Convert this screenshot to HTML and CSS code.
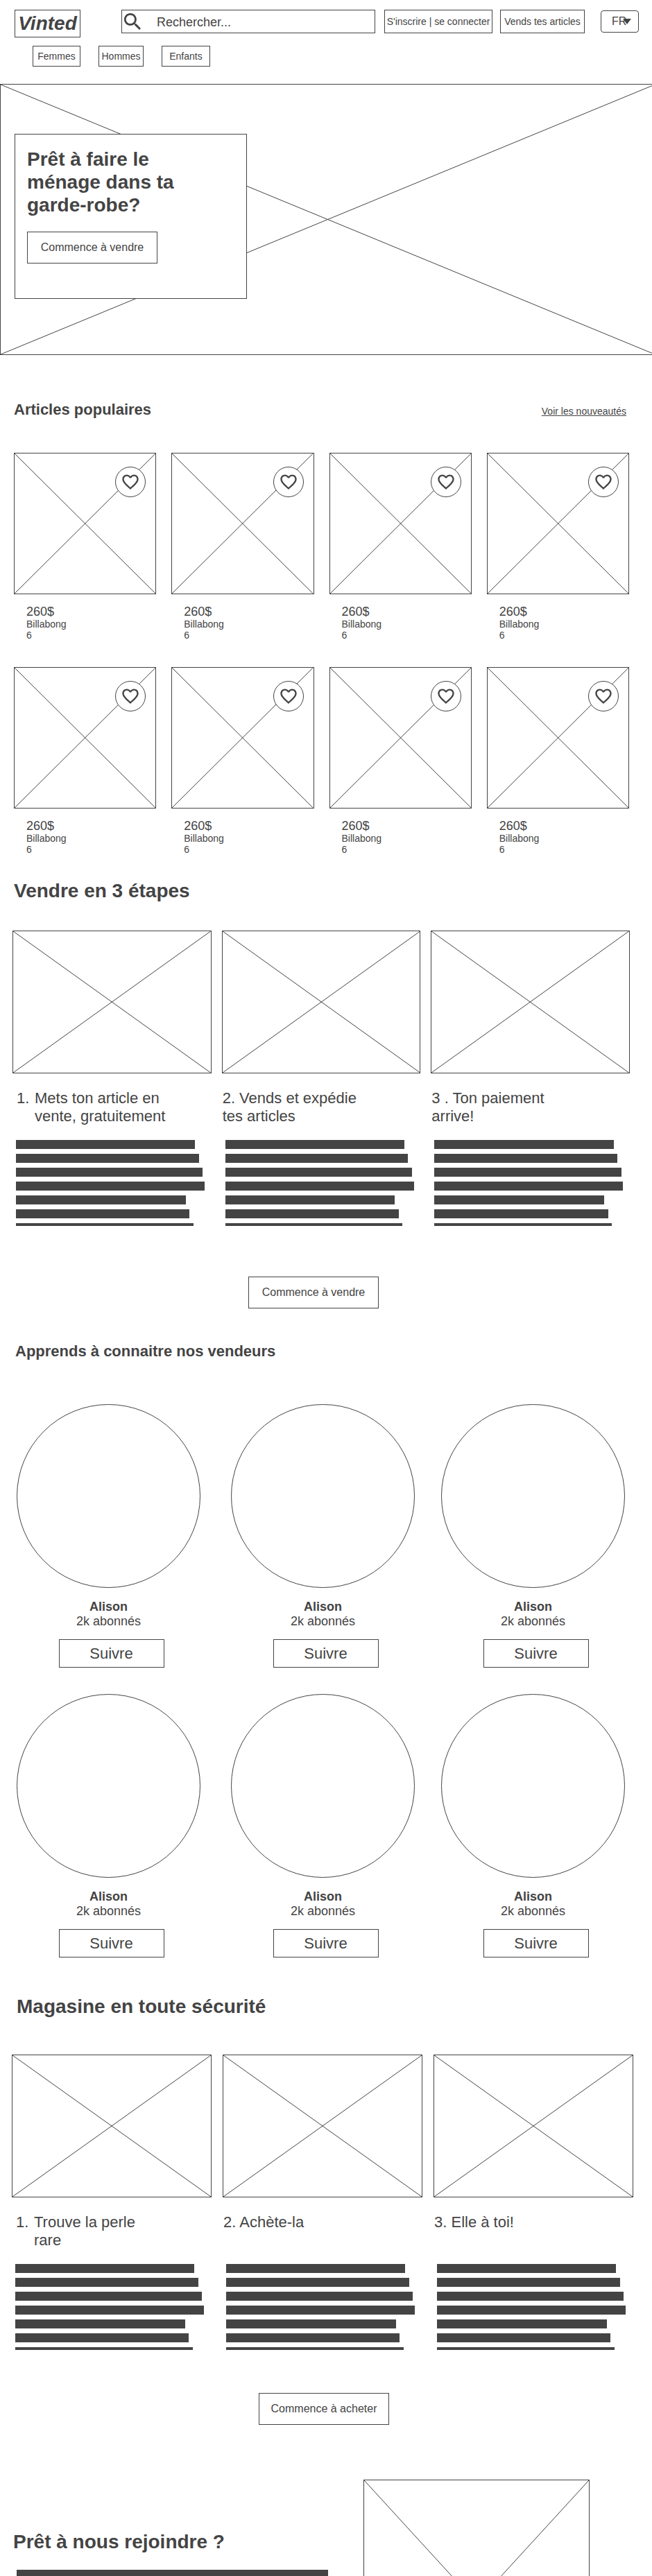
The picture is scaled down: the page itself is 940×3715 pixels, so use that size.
FILE: index.html
```html
<!DOCTYPE html>
<html lang="fr">
<head>
<meta charset="utf-8">
<meta name="viewport" content="width=device-width, initial-scale=1">
<title>Vinted</title>
<link rel="stylesheet" href="styles.css">
</head>
<body>
<svg width="0" height="0" class="sprite" aria-hidden="true">
  <symbol id="heart" viewBox="0 0 24 24"><path d="M16.5 3c-1.74 0-3.41.81-4.5 2.09C10.91 3.81 9.24 3 7.5 3 4.42 3 2 5.42 2 8.5c0 3.78 3.4 6.86 8.55 11.54L12 21.35l1.45-1.32C18.6 15.36 22 12.28 22 8.5 22 5.42 19.58 3 16.5 3zm-4.4 15.55l-.1.1-.1-.1C7.14 14.24 4 11.39 4 8.5 4 6.5 5.5 5 7.5 5c1.54 0 3.04.99 3.57 2.36h1.87C13.46 5.99 14.96 5 16.5 5c2 0 3.5 1.5 3.5 3.5 0 2.89-3.14 5.74-7.9 10.05z"/></symbol>
</svg>

<header class="header">
  <div class="header-top">
    <a class="logo box" href="#">Vinted</a>
    <form class="search box" role="search">
      <svg class="search-icon" viewBox="3 3 17.49 17.49" aria-hidden="true"><path d="M15.5 14h-.79l-.28-.27C15.41 12.59 16 11.11 16 9.5 16 5.91 13.09 3 9.5 3S3 5.91 3 9.5 5.91 16 9.5 16c1.61 0 3.09-.59 4.23-1.57l.27.28v.79l5 4.99L20.49 19l-4.99-5zm-6 0C7.01 14 5 11.99 5 9.5S7.01 5 9.5 5 14 7.01 14 9.5 11.99 14 9.5 14z"/></svg>
      <input class="search-input" type="search" placeholder="Rechercher..." aria-label="Rechercher">
    </form>
    <button class="box login" type="button">S'inscrire | se connecter</button>
    <button class="box sell" type="button">Vends tes articles</button>
    <div class="lang">
      <select class="lang-select" aria-label="Langue"><option>FR</option></select>
      <svg class="lang-arrow" viewBox="0 0 12 8" aria-hidden="true"><path d="M0 0h12L6 8z"/></svg>
    </div>
  </div>
  <nav class="nav">
    <a class="box nav-women" href="#">Femmes</a>
    <a class="box nav-men" href="#">Hommes</a>
    <a class="box nav-kids" href="#">Enfants</a>
  </nav>
</header>

<main>
  <section class="hero">
    <svg class="hero-lines" aria-hidden="true"><line x1="0" y1="0" x2="100%" y2="100%"/><line x1="0" y1="100%" x2="100%" y2="0"/></svg>
    <div class="hero-card box">
      <h1 class="title">Prêt à faire le<br>ménage dans ta<br>garde-robe?</h1>
      <button class="box cta" type="button">Commence à vendre</button>
    </div>
  </section>

  <section class="popular">
    <div class="popular-head">
      <h2 class="subtitle">Articles populaires</h2>
      <a class="more" href="#">Voir les nouveautés</a>
    </div>
    <div class="products">
      <article class="product">
        <svg class="picture" aria-hidden="true"><line x1="0" y1="0" x2="100%" y2="100%"/><line x1="0" y1="100%" x2="100%" y2="0"/></svg>
        <button class="like" type="button" aria-label="Ajouter aux favoris"><svg><use href="#heart"/></svg></button>
        <div class="product-info"><p class="price">260$</p><p>Billabong</p><p>6</p></div>
      </article>
      <article class="product">
        <svg class="picture" aria-hidden="true"><line x1="0" y1="0" x2="100%" y2="100%"/><line x1="0" y1="100%" x2="100%" y2="0"/></svg>
        <button class="like" type="button" aria-label="Ajouter aux favoris"><svg><use href="#heart"/></svg></button>
        <div class="product-info"><p class="price">260$</p><p>Billabong</p><p>6</p></div>
      </article>
      <article class="product">
        <svg class="picture" aria-hidden="true"><line x1="0" y1="0" x2="100%" y2="100%"/><line x1="0" y1="100%" x2="100%" y2="0"/></svg>
        <button class="like" type="button" aria-label="Ajouter aux favoris"><svg><use href="#heart"/></svg></button>
        <div class="product-info"><p class="price">260$</p><p>Billabong</p><p>6</p></div>
      </article>
      <article class="product">
        <svg class="picture" aria-hidden="true"><line x1="0" y1="0" x2="100%" y2="100%"/><line x1="0" y1="100%" x2="100%" y2="0"/></svg>
        <button class="like" type="button" aria-label="Ajouter aux favoris"><svg><use href="#heart"/></svg></button>
        <div class="product-info"><p class="price">260$</p><p>Billabong</p><p>6</p></div>
      </article>
      <article class="product">
        <svg class="picture" aria-hidden="true"><line x1="0" y1="0" x2="100%" y2="100%"/><line x1="0" y1="100%" x2="100%" y2="0"/></svg>
        <button class="like" type="button" aria-label="Ajouter aux favoris"><svg><use href="#heart"/></svg></button>
        <div class="product-info"><p class="price">260$</p><p>Billabong</p><p>6</p></div>
      </article>
      <article class="product">
        <svg class="picture" aria-hidden="true"><line x1="0" y1="0" x2="100%" y2="100%"/><line x1="0" y1="100%" x2="100%" y2="0"/></svg>
        <button class="like" type="button" aria-label="Ajouter aux favoris"><svg><use href="#heart"/></svg></button>
        <div class="product-info"><p class="price">260$</p><p>Billabong</p><p>6</p></div>
      </article>
      <article class="product">
        <svg class="picture" aria-hidden="true"><line x1="0" y1="0" x2="100%" y2="100%"/><line x1="0" y1="100%" x2="100%" y2="0"/></svg>
        <button class="like" type="button" aria-label="Ajouter aux favoris"><svg><use href="#heart"/></svg></button>
        <div class="product-info"><p class="price">260$</p><p>Billabong</p><p>6</p></div>
      </article>
      <article class="product">
        <svg class="picture" aria-hidden="true"><line x1="0" y1="0" x2="100%" y2="100%"/><line x1="0" y1="100%" x2="100%" y2="0"/></svg>
        <button class="like" type="button" aria-label="Ajouter aux favoris"><svg><use href="#heart"/></svg></button>
        <div class="product-info"><p class="price">260$</p><p>Billabong</p><p>6</p></div>
      </article>
    </div>
  </section>

  <section class="selling">
    <h2 class="title">Vendre en 3 étapes</h2>
    <div class="steps">
      <article>
        <svg class="picture" aria-hidden="true"><line x1="0" y1="0" x2="100%" y2="100%"/><line x1="0" y1="100%" x2="100%" y2="0"/></svg>
        <h3 class="step-title numbered"><span>1.</span><span>Mets ton article en<br>vente, gratuitement</span></h3>
        <div class="lines"><i></i><i></i><i></i><i></i><i></i><i></i><i></i></div>
      </article>
      <article>
        <svg class="picture" aria-hidden="true"><line x1="0" y1="0" x2="100%" y2="100%"/><line x1="0" y1="100%" x2="100%" y2="0"/></svg>
        <h3 class="step-title">2. Vends et expédie<br>tes articles</h3>
        <div class="lines"><i></i><i></i><i></i><i></i><i></i><i></i><i></i></div>
      </article>
      <article>
        <svg class="picture" aria-hidden="true"><line x1="0" y1="0" x2="100%" y2="100%"/><line x1="0" y1="100%" x2="100%" y2="0"/></svg>
        <h3 class="step-title">3 . Ton paiement<br>arrive!</h3>
        <div class="lines"><i></i><i></i><i></i><i></i><i></i><i></i><i></i></div>
      </article>
    </div>
    <div class="action"><button class="box cta" type="button">Commence à vendre</button></div>
  </section>

  <section class="sellers">
    <h2 class="subtitle">Apprends à connaitre nos vendeurs</h2>
    <div class="seller-grid">
      <article class="seller"><div class="avatar"></div><h3 class="name">Alison</h3><p>2k abonnés</p><button class="box follow" type="button">Suivre</button></article>
      <article class="seller"><div class="avatar"></div><h3 class="name">Alison</h3><p>2k abonnés</p><button class="box follow" type="button">Suivre</button></article>
      <article class="seller"><div class="avatar"></div><h3 class="name">Alison</h3><p>2k abonnés</p><button class="box follow" type="button">Suivre</button></article>
      <article class="seller"><div class="avatar"></div><h3 class="name">Alison</h3><p>2k abonnés</p><button class="box follow" type="button">Suivre</button></article>
      <article class="seller"><div class="avatar"></div><h3 class="name">Alison</h3><p>2k abonnés</p><button class="box follow" type="button">Suivre</button></article>
      <article class="seller"><div class="avatar"></div><h3 class="name">Alison</h3><p>2k abonnés</p><button class="box follow" type="button">Suivre</button></article>
    </div>
  </section>

  <section class="buying">
    <h2 class="title">Magasine en toute sécurité</h2>
    <div class="steps">
      <article>
        <svg class="picture" aria-hidden="true"><line x1="0" y1="0" x2="100%" y2="100%"/><line x1="0" y1="100%" x2="100%" y2="0"/></svg>
        <h3 class="step-title numbered"><span>1.</span><span>Trouve la perle<br>rare</span></h3>
        <div class="lines"><i></i><i></i><i></i><i></i><i></i><i></i><i></i></div>
      </article>
      <article>
        <svg class="picture" aria-hidden="true"><line x1="0" y1="0" x2="100%" y2="100%"/><line x1="0" y1="100%" x2="100%" y2="0"/></svg>
        <h3 class="step-title">2. Achète-la</h3>
        <div class="lines"><i></i><i></i><i></i><i></i><i></i><i></i><i></i></div>
      </article>
      <article>
        <svg class="picture" aria-hidden="true"><line x1="0" y1="0" x2="100%" y2="100%"/><line x1="0" y1="100%" x2="100%" y2="0"/></svg>
        <h3 class="step-title">3. Elle à toi!</h3>
        <div class="lines"><i></i><i></i><i></i><i></i><i></i><i></i><i></i></div>
      </article>
    </div>
    <div class="action"><button class="box cta" type="button">Commence à acheter</button></div>
  </section>

  <section class="join">
    <div class="join-text">
      <h2 class="title">Prêt à nous rejoindre ?</h2>
      <div class="lines"><i></i></div>
    </div>
    <svg class="picture" aria-hidden="true"><line x1="0" y1="0" x2="100%" y2="100%"/><line x1="0" y1="100%" x2="100%" y2="0"/></svg>
  </section>
</main>
</body>
</html>
```

FILE: styles.css
```css
:root {
  --ink: #444;
}

* {
  box-sizing: border-box;
}

body {
  margin: 0;
  background: #fff;
  color: var(--ink);
  font: 14px/16px "Liberation Sans", Arial, sans-serif;
}

h1, h2, h3, p {
  margin: 0;
}

button, input, select {
  font: inherit;
  color: inherit;
}

a {
  color: inherit;
}

.sprite {
  position: absolute;
}

.box {
  display: flex;
  align-items: center;
  justify-content: center;
  padding: 0;
  border: 1px solid var(--ink);
  background: #fff;
  text-decoration: none;
  white-space: nowrap;
}

.title {
  font-size: 28px;
  line-height: 32px;
  font-weight: bold;
}

.subtitle {
  font-size: 22px;
  line-height: 26px;
  font-weight: bold;
}

.cta {
  width: 188px;
  height: 46px;
  font-size: 16px;
}

.picture {
  display: block;
  width: 100%;
  border: 1px solid var(--ink);
}

.picture line,
.hero-lines line {
  stroke: var(--ink);
  stroke-width: 1;
}

/* Header */

.header {
  padding: 14px 19px 25px 21px;
}

.header-top {
  display: flex;
  align-items: flex-start;
}

.logo {
  width: 95px;
  height: 40px;
  margin-right: 59px;
  font-size: 28px;
  font-weight: bold;
  font-style: italic;
}

.search {
  flex: 1;
  min-width: 0;
  height: 34px;
  margin-right: 13px;
  padding-left: 3px;
}

.search-icon {
  flex: none;
  width: 24px;
  height: 24px;
  fill: var(--ink);
}

.search-input {
  flex: 1;
  min-width: 0;
  height: 32px;
  padding: 2px 8px 0 23px;
  border: 0;
  outline: 0;
  background: none;
  font-size: 18px;
  appearance: none;
}

.search-input::placeholder {
  color: var(--ink);
  opacity: 1;
}

.login {
  width: 156px;
  height: 34px;
  margin-right: 11px;
}

.sell {
  width: 122px;
  height: 34px;
  margin-right: 23px;
}

.lang {
  position: relative;
  margin-top: 1px;
}

.lang-select {
  display: block;
  width: 55px;
  height: 32px;
  padding: 0 0 0 15px;
  border: 1px solid var(--ink);
  border-radius: 4px;
  background: #fff;
  font-size: 16px;
  appearance: none;
}

.lang-arrow {
  position: absolute;
  top: 12px;
  right: 11px;
  width: 12px;
  height: 8px;
  fill: var(--ink);
  pointer-events: none;
}

.nav {
  display: flex;
  gap: 26px;
  margin-top: 12px;
  padding-left: 26px;
}

.nav .box {
  height: 30px;
}

.nav-women {
  width: 69px;
}

.nav-men {
  width: 65px;
}

.nav-kids {
  width: 70px;
}

/* Hero */

.hero {
  position: relative;
  overflow: hidden;
  padding: 71px 21px 80px 20px;
  border: 1px solid var(--ink);
  border-right: 0;
}

.hero-lines {
  position: absolute;
  top: 0;
  left: 0;
  width: calc(100% + 4px);
  height: 100%;
}

.hero-card {
  position: relative;
  flex-direction: column;
  align-items: flex-start;
  justify-content: flex-start;
  gap: 22px;
  width: 335px;
  padding: 19px 17px 50px;
}

.hero-card .title {
  line-height: 33px;
}

/* Popular items */

.popular {
  padding: 66px 33px 0 20px;
}

.popular-head {
  display: flex;
  align-items: baseline;
  justify-content: space-between;
  margin-bottom: 49px;
  padding-right: 4px;
}

.products {
  display: grid;
  grid-template-columns: repeat(4, 1fr);
  gap: 38px 22px;
}

.product {
  position: relative;
}

.product .picture {
  height: 204px;
}

.like {
  position: absolute;
  top: 20px;
  right: 15px;
  display: grid;
  place-items: center;
  width: 44px;
  height: 44px;
  padding: 0;
  border: 1px solid var(--ink);
  border-radius: 50%;
  background: #fff;
}

.like svg {
  width: 28px;
  height: 28px;
  fill: var(--ink);
}

.product-info {
  padding: 15px 0 0 18px;
}

.price {
  font-size: 18px;
  line-height: 20px;
}

/* Steps */

.selling {
  padding: 36px 32px 0 18px;
}

.selling .title {
  padding-left: 2px;
}

.steps {
  display: grid;
  grid-template-columns: repeat(3, 1fr);
  gap: 15px;
  margin-top: 41px;
}

.steps .picture {
  height: 206px;
}

.step-title {
  min-height: 52px;
  margin: 23px 0 21px;
  padding-left: 1px;
  font-size: 22px;
  line-height: 26px;
  font-weight: normal;
}

.numbered {
  display: grid;
  grid-template-columns: 26px 1fr;
  padding-left: 6px;
}

.lines {
  display: flex;
  flex-direction: column;
  gap: 7px;
  max-width: 277px;
  padding-left: 5px;
}

.lines i {
  height: 13px;
  background: var(--ink);
}

.steps .lines i:nth-child(1) { width: 95%; }
.steps .lines i:nth-child(2) { width: 97%; }
.steps .lines i:nth-child(3) { width: 99%; }
.steps .lines i:nth-child(5) { width: 90%; }
.steps .lines i:nth-child(6) { width: 92%; }
.steps .lines i:nth-child(7) { width: 94%; height: 4px; }

.action {
  display: flex;
  justify-content: center;
  margin-top: 73px;
}

.selling .action {
  padding-right: 22px;
}

/* Sellers */

.sellers {
  padding: 49px 39px 0 22px;
}

.seller-grid {
  display: grid;
  grid-template-columns: 309fr 303fr 265fr;
  gap: 38px 0;
  margin-top: 63px;
  padding-left: 2px;
}

.seller {
  display: flex;
  flex-direction: column;
  align-items: center;
  width: 265px;
  font-size: 18px;
  line-height: 21px;
}

.avatar {
  width: 265px;
  height: 265px;
  margin-bottom: 17px;
  border: 1px solid var(--ink);
  border-radius: 50%;
}

.name {
  font-size: 18px;
}

.follow {
  width: 152px;
  height: 41px;
  margin: 15px 0 0 8px;
  font-size: 22px;
}

/* Buying */

.buying {
  padding: 55px 27px 0 17px;
}

.buying .title {
  padding-left: 7px;
}

.buying .steps {
  gap: 16px;
  margin-top: 53px;
}

.buying .action {
  margin-top: 62px;
  padding-left: 4px;
}

/* Join */

.join {
  display: flex;
  justify-content: space-between;
  max-height: 139px;
  margin-top: 79px;
  padding: 0 90px 0 19px;
  overflow: hidden;
}

.join-text {
  width: 454px;
  padding-top: 74px;
}

.join .lines {
  max-width: none;
  margin-top: 24px;
}

.join .picture {
  flex: none;
  width: 326px;
  height: 356px;
}
```
